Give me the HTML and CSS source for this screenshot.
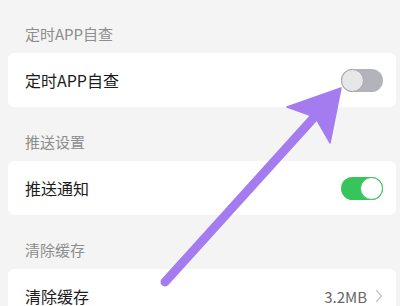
FILE: index.html
```html
<!DOCTYPE html>
<html lang="zh-CN">
<head>
<meta charset="utf-8">
<link rel="stylesheet" href="styles.css">
</head>
<body>
<div class="page">
  <div class="section-title first">定时APP自查</div>
  <div class="card">
    <span class="label">定时APP自查</span>
    <span class="toggle off"><span class="knob"></span></span>
  </div>
  <div class="section-title">推送设置</div>
  <div class="card">
    <span class="label">推送通知</span>
    <span class="toggle on"><span class="knob"></span></span>
  </div>
  <div class="section-title">清除缓存</div>
  <div class="card">
    <span class="label">清除缓存</span>
    <span class="value">3.2MB<svg class="chev" width="8" height="14" viewBox="0 0 8 14"><path d="M1.5 1.5 L6.5 7 L1.5 12.5" fill="none" stroke="#c4c4c4" stroke-width="1.3" stroke-linecap="round" stroke-linejoin="round"/></svg></span>
  </div>
  <svg class="arrow" width="400" height="306" viewBox="0 0 400 306">
    <line x1="165" y1="282" x2="318" y2="113" stroke="#a47cf0" stroke-width="9" stroke-linecap="round"/>
    <path d="M341 88 L287 107 L315 117 L330 143 Z" fill="#a47cf0" stroke="#a47cf0" stroke-width="1.5" stroke-linejoin="round"/>
  </svg>
</div>
</body>
</html>
```
FILE: styles.css
```css
html, body {
  margin: 0;
  padding: 0;
}
body {
  background: #f4f4f4;
  font-family: "Noto Sans CJK SC", "Noto Sans", sans-serif;
  width: 400px;
  height: 306px;
  overflow: hidden;
}
.page {
  position: relative;
  display: flex;
  flex-direction: column;
}
.section-title {
  height: 54px;
  box-sizing: border-box;
  display: flex;
  align-items: flex-end;
  padding: 0 0 12px 25px;
  font-size: 15px;
  line-height: 15px;
  color: #8d8d8d;
}
.section-title.first {
  height: 53px;
}
.card {
  height: 54px;
  margin: 0 4px 0 8px;
  background: #ffffff;
  border-radius: 6px;
  display: flex;
  align-items: center;
  justify-content: space-between;
  padding: 0 13px 0 17px;
  flex-shrink: 0;
}
.label {
  font-size: 16px;
  color: #1c1c1c;
}
.toggle {
  width: 42px;
  height: 23px;
  border-radius: 12px;
  box-sizing: border-box;
  display: flex;
  align-items: center;
}
.toggle.off {
  background: #b3b3bb;
  justify-content: flex-start;
}
.toggle.on {
  background: #35c55b;
  justify-content: flex-end;
}
.knob {
  width: 23px;
  height: 23px;
  border-radius: 50%;
  box-sizing: border-box;
}
.toggle.off .knob {
  background: #e7e7ea;
  border: 1px solid #a5a5ab;
}
.toggle.on .knob {
  background: #ffffff;
  border: 1.5px solid #35c55b;
}
.value {
  display: flex;
  align-items: center;
  gap: 8px;
  font-size: 15px;
  color: #666666;
}
.chev {
  display: block;
}
.arrow {
  position: absolute;
  left: 0;
  top: 0;
  pointer-events: none;
}
```
